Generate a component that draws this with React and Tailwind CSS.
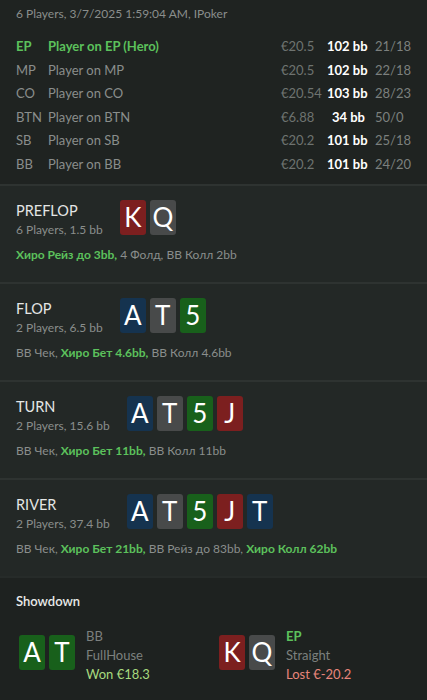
import React from 'react';

const players = [
  { pos: 'EP', name: 'Player on EP (Hero)', stack: '€20.5', bb: '102 bb', stat: '21/18', hero: true },
  { pos: 'MP', name: 'Player on MP', stack: '€20.5', bb: '102 bb', stat: '22/18' },
  { pos: 'CO', name: 'Player on CO', stack: '€20.54', bb: '103 bb', stat: '28/23' },
  { pos: 'BTN', name: 'Player on BTN', stack: '€6.88', bb: '34 bb', stat: '50/0' },
  { pos: 'SB', name: 'Player on SB', stack: '€20.2', bb: '101 bb', stat: '25/18' },
  { pos: 'BB', name: 'Player on BB', stack: '€20.2', bb: '101 bb', stat: '24/20' },
];

const suitBg = {
  h: 'bg-[#7c1f1f]',
  s: 'bg-[#484a4a]',
  d: 'bg-[#15334f]',
  c: 'bg-[#18601b]',
};

const streets = [
  {
    name: 'PREFLOP',
    sub: '6 Players, 1.5 bb',
    cards: [['K', 'h'], ['Q', 's']],
    actions: [['Хиро Рейз до 3bb,', true], [' 4 Фолд, ВВ Колл 2bb', false]],
  },
  {
    name: 'FLOP',
    sub: '2 Players, 6.5 bb',
    cards: [['A', 'd'], ['T', 's'], ['5', 'c']],
    actions: [['ВВ Чек, ', false], ['Хиро Бет 4.6bb,', true], [' ВВ Колл 4.6bb', false]],
  },
  {
    name: 'TURN',
    sub: '2 Players, 15.6 bb',
    cards: [['A', 'd'], ['T', 's'], ['5', 'c'], ['J', 'h']],
    actions: [['ВВ Чек, ', false], ['Хиро Бет 11bb,', true], [' ВВ Колл 11bb', false]],
  },
  {
    name: 'RIVER',
    sub: '2 Players, 37.4 bb',
    cards: [['A', 'd'], ['T', 's'], ['5', 'c'], ['J', 'h'], ['T', 'd']],
    actions: [
      ['ВВ Чек, ', false],
      ['Хиро Бет 21bb,', true],
      [' ВВ Рейз до 83bb, ', false],
      ['Хиро Колл 62bb', true],
    ],
  },
];

function Card({ rank, suit }) {
  return (
    <div className={`w-[26px] h-[35px] rounded-[3px] flex items-center justify-center text-white text-[26px] leading-none ${suitBg[suit]}`}>
      {rank}
    </div>
  );
}

function Street({ street }) {
  return (
    <div className="bg-[#232826] border-t-2 border-[#2e3331] px-4 pt-[14px] pb-[18px]">
      <div className="flex items-start gap-[17px]">
        <div className="pt-[2px]">
          <div className="text-[14.5px] leading-[18px] text-[#e4e6e5]">{street.name}</div>
          <div className="text-[12px] leading-[19px] text-[#8a8e8c]">{street.sub}</div>
        </div>
        <div className="flex gap-[4px]">
          {street.cards.map(([r, s], i) => (
            <Card key={i} rank={r} suit={s} />
          ))}
        </div>
      </div>
      <div className="mt-[7px] text-[12px] leading-[18px] text-[#8a8e8c] whitespace-nowrap">
        {street.actions.map(([t, hero], i) => (
          <span key={i} className={hero ? 'font-bold text-[#5cc15c]' : ''}>{t}</span>
        ))}
      </div>
    </div>
  );
}

export default function App() {
  return (
    <div
      className="w-[427px] min-h-[700px] bg-[#1f2321] overflow-hidden"
      style={{ fontFamily: 'Lato, "Open Sans", sans-serif' }}
    >
      <div className="px-4 pt-[5px] pb-[7px]">
        <div className="text-[12px] leading-[18px] text-[#8a8e8c]">6 Players, 3/7/2025 1:59:04 AM, IPoker</div>
        <div className="mt-[12px]">
          {players.map((p) => (
            <div key={p.pos} className="flex items-center h-[23.6px] text-[13px] whitespace-nowrap">
              <div className={`w-[32px] ${p.hero ? 'font-bold text-[#5cc15c]' : 'text-[#8a8e8c]'}`}>{p.pos}</div>
              <div className={`flex-1 ${p.hero ? 'font-bold text-[#5cc15c]' : 'text-[#8a8e8c]'}`}>{p.name}</div>
              <div className="w-[46px] text-[#6e7370]">{p.stack}</div>
              <div className="w-[38px] text-right font-bold text-white">{p.bb}</div>
              <div className="w-[46px] pl-[10px] text-[#7c807e]">{p.stat}</div>
            </div>
          ))}
        </div>
      </div>

      {streets.map((s) => (
        <Street key={s.name} street={s} />
      ))}

      <div className="bg-[#1e2220] border-t-2 border-[#262b29] px-4 pt-[14px] pb-[20px]">
        <div className="text-[13px] leading-[18px] text-[#e8eae9] font-semibold">Showdown</div>
        <div className="grid grid-cols-[200px_1fr] mt-[17px] pl-[3px]">
          <div className="flex items-start gap-[11px]">
            <div className="flex gap-[4px] mt-[8px]">
              <Card rank="A" suit="c" />
              <Card rank="T" suit="c" />
            </div>
            <div className="text-[13px] leading-[19px]">
              <div className="text-[#7c807e]">BB</div>
              <div className="text-[#7c807e]">FullHouse</div>
              <div className="text-[#a7da7f]">Won €18.3</div>
            </div>
          </div>
          <div className="flex items-start gap-[11px]">
            <div className="flex gap-[4px] mt-[8px]">
              <Card rank="K" suit="h" />
              <Card rank="Q" suit="s" />
            </div>
            <div className="text-[13px] leading-[19px]">
              <div className="font-bold text-[#5cc15c]">EP</div>
              <div className="text-[#7c807e]">Straight</div>
              <div className="text-[#e8857b]">Lost €-20.2</div>
            </div>
          </div>
        </div>
      </div>
    </div>
  );
}
